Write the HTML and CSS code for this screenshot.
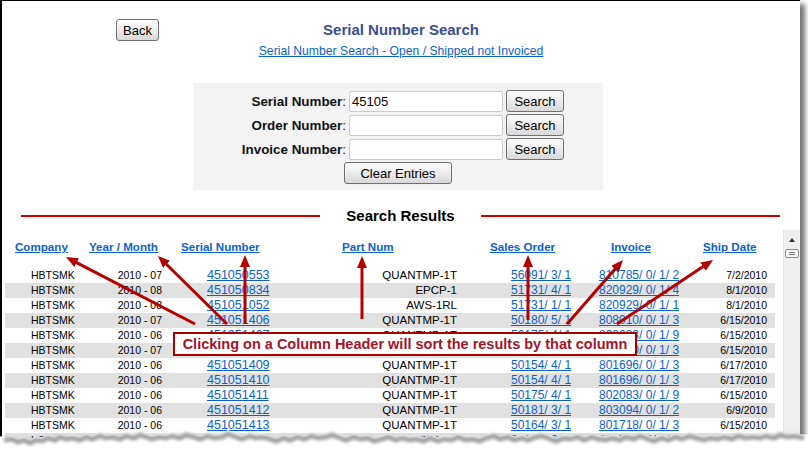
FILE: index.html
```html
<!DOCTYPE html>
<html lang="en">
<head>
    <meta charset="UTF-8">
    <title>Serial Number Search</title>
    <link rel="stylesheet" href="styles.css">
</head>
<body>
<div class="page">
    <div class="shot">
        <div class="top">
            <div class="top-left"><button type="button" class="btn back">Back</button></div>
            <h1 class="title">Serial Number Search</h1>
            <div></div>
        </div>
        <div class="sublink"><a href="#">Serial Number Search - Open / Shipped not Invoiced</a></div>

        <form class="search-box">
            <label class="lbl"><b>Serial Number</b>:</label>
            <input type="text" value="45105">
            <button type="button" class="btn search">Search</button>
            <span></span>
            <label class="lbl"><b>Order Number</b>:</label>
            <input type="text">
            <button type="button" class="btn search">Search</button>
            <span></span>
            <label class="lbl"><b>Invoice Number</b>:</label>
            <input type="text">
            <button type="button" class="btn search">Search</button>
            <span></span>
            <button type="button" class="btn clear">Clear Entries</button>
        </form>

        <div class="results-head">
            <span class="rule"></span>
            <h2>Search Results</h2>
            <span class="rule"></span>
        </div>

        <div class="results">
            <div class="grid">
                <div class="row head">
                    <span><a href="#">Company</a></span>
                    <span><a href="#">Year / Month</a></span>
                    <span><a href="#">Serial Number</a></span>
                    <span><a href="#">Part Num</a></span>
                    <span><a href="#">Sales Order</a></span>
                    <span><a href="#">Invoice</a></span>
                    <span><a href="#">Ship Date</a></span>
                </div>
                <div class="body">
                    <div class="row"><span>HBTSMK</span><span>2010 - 07</span><span><a href="#">451050553</a></span><span>QUANTMP-1T</span><span><a href="#">56091/ 3/ 1</a></span><span><a href="#">810785/ 0/ 1/ 2</a></span><span>7/2/2010</span></div>
                    <div class="row"><span>HBTSMK</span><span>2010 - 08</span><span><a href="#">451050834</a></span><span>EPCP-1</span><span><a href="#">51731/ 4/ 1</a></span><span><a href="#">820929/ 0/ 1/ 4</a></span><span>8/1/2010</span></div>
                    <div class="row"><span>HBTSMK</span><span>2010 - 08</span><span><a href="#">451051052</a></span><span>AWS-1RL</span><span><a href="#">51731/ 1/ 1</a></span><span><a href="#">820929/ 0/ 1/ 1</a></span><span>8/1/2010</span></div>
                    <div class="row"><span>HBTSMK</span><span>2010 - 07</span><span><a href="#">451051406</a></span><span>QUANTMP-1T</span><span><a href="#">50180/ 5/ 1</a></span><span><a href="#">808010/ 0/ 1/ 3</a></span><span>6/15/2010</span></div>
                    <div class="row"><span>HBTSMK</span><span>2010 - 06</span><span><a href="#">451051407</a></span><span>QUANTMP-1T</span><span><a href="#">50175/ 4/ 1</a></span><span><a href="#">802083/ 0/ 1/ 9</a></span><span>6/15/2010</span></div>
                    <div class="row"><span>HBTSMK</span><span>2010 - 07</span><span><a href="#">451051408</a></span><span>QUANTMP-1T</span><span><a href="#">50180/ 5/ 1</a></span><span><a href="#">808010/ 0/ 1/ 3</a></span><span>6/15/2010</span></div>
                    <div class="row"><span>HBTSMK</span><span>2010 - 06</span><span><a href="#">451051409</a></span><span>QUANTMP-1T</span><span><a href="#">50154/ 4/ 1</a></span><span><a href="#">801696/ 0/ 1/ 3</a></span><span>6/17/2010</span></div>
                    <div class="row"><span>HBTSMK</span><span>2010 - 06</span><span><a href="#">451051410</a></span><span>QUANTMP-1T</span><span><a href="#">50154/ 4/ 1</a></span><span><a href="#">801696/ 0/ 1/ 3</a></span><span>6/17/2010</span></div>
                    <div class="row"><span>HBTSMK</span><span>2010 - 06</span><span><a href="#">451051411</a></span><span>QUANTMP-1T</span><span><a href="#">50175/ 4/ 1</a></span><span><a href="#">802083/ 0/ 1/ 9</a></span><span>6/15/2010</span></div>
                    <div class="row"><span>HBTSMK</span><span>2010 - 06</span><span><a href="#">451051412</a></span><span>QUANTMP-1T</span><span><a href="#">50181/ 3/ 1</a></span><span><a href="#">803094/ 0/ 1/ 2</a></span><span>6/9/2010</span></div>
                    <div class="row"><span>HBTSMK</span><span>2010 - 06</span><span><a href="#">451051413</a></span><span>QUANTMP-1T</span><span><a href="#">50164/ 3/ 1</a></span><span><a href="#">801718/ 0/ 1/ 3</a></span><span>6/15/2010</span></div>
                    <div class="row"><span>HBTSMK</span><span>2010 - 06</span><span><a href="#">451051414</a></span><span>QUANTMP-1T</span><span><a href="#">50164/ 3/ 1</a></span><span><a href="#">801718/ 0/ 1/ 3</a></span><span>6/15/2010</span></div>
                </div>
            </div>
            <div class="scrollbar">
                <span class="up"></span>
                <span class="thumb"></span>
            </div>
        </div>
    </div>

    <!-- annotation layer -->
    <svg class="arrows" width="808" height="449" viewBox="0 0 808 449">
        <defs>
            <marker id="head" viewBox="0 0 12 10" refX="6" refY="5" markerWidth="12" markerHeight="10" markerUnits="userSpaceOnUse" orient="auto">
                <path d="M0,0 L12,5 L0,10 z" fill="#b50000"/>
            </marker>
        </defs>
        <g stroke="#b50000" stroke-width="3" marker-end="url(#head)">
            <line x1="195" y1="324" x2="71.3" y2="259.8"/>
            <line x1="227" y1="324" x2="162.3" y2="260.2"/>
            <line x1="245" y1="324" x2="245" y2="261"/>
            <line x1="362" y1="319" x2="362" y2="262"/>
            <line x1="528" y1="320" x2="528" y2="261"/>
            <line x1="567" y1="324" x2="619" y2="264.5"/>
            <line x1="617" y1="324" x2="708" y2="263.3"/>
        </g>
    </svg>
    <div class="callout">Clicking on a Column Header will sort the results by that column</div>

    <svg class="torn" width="808" height="449" viewBox="0 0 808 449">
        <defs>
            <filter id="soft" x="-5%" y="-100%" width="110%" height="300%">
                <feGaussianBlur stdDeviation="1.6"/>
            </filter>
        </defs>
        <polygon fill="#fff" points="-2,449 -2,436 6,437 12,435 18,438 24,436 30,439 36,436 42,437 48,434 55,436 60,433 66,435 72,434 80,436 86,433 92,435 100,432 106,434 112,433 120,435 126,432 134,434 140,431 146,433 152,435 160,433 166,434 172,432 180,434 186,431 194,433 200,435 208,432 214,434 222,433 228,430 236,433 242,435 250,432 256,434 262,433 270,435 276,437 284,434 290,436 298,433 304,435 312,432 318,434 326,433 332,431 340,434 346,436 354,433 360,435 368,434 374,437 382,435 388,433 396,436 402,434 410,436 416,435 424,437 430,434 438,437 444,435 452,436 458,433 466,436 472,435 480,437 486,434 494,432 500,435 508,433 514,436 522,434 528,436 536,433 542,432 550,435 556,437 564,434 570,435 578,433 584,436 592,433 598,435 606,436 612,434 620,436 626,433 634,435 640,432 648,435 654,437 662,434 668,436 676,433 682,435 690,432 696,434 704,436 710,434 718,435 724,433 732,435 738,432 746,434 752,433 760,434 766,432 774,434 780,431 788,433 794,432 800,434 810,435 810,449"/>
        <polyline fill="none" stroke="#7a7a7a" stroke-width="5" opacity="0.7" filter="url(#soft)" points="4,440 12,439 18,442 24,440 30,443 36,440 42,441 48,438 55,440 60,437 66,439 72,438 80,440 86,437 92,439 100,436 106,438 112,437 120,439 126,436 134,438 140,435 146,437 152,439 160,437 166,438 172,436 180,438 186,435 194,437 200,439 208,436 214,438 222,437 228,434 236,437 242,439 250,436 256,438 262,437 270,439 276,441 284,438 290,440 298,437 304,439 312,436 318,438 326,437 332,435 340,438 346,440 354,437 360,439 368,438 374,441 382,439 388,437 396,440 402,438 410,440 416,439 424,441 430,438 438,441 444,439 452,440 458,437 466,440 472,439 480,441 486,438 494,436 500,439 508,437 514,440 522,438 528,440 536,437 542,436 550,439 556,441 564,438 570,439 578,437 584,440 592,437 598,439 606,440 612,438 620,440 626,437 634,439 640,436 648,439 654,441 662,438 668,440 676,437 682,439 690,436 696,438 704,440 710,438 718,439 724,437 732,439 738,436 746,438 752,437 760,438 766,436 774,438 780,435 788,437 794,436 804,438"/>
    </svg>
</div>
</body>
</html>
```

FILE: styles.css
```css
body {
    margin: 0;
    background-color: #fff;
    font-family: "Liberation Sans", Arial, sans-serif;
    color: #000;
}
a {
    color: #0b62cc;
    text-decoration: underline;
}
.page {
    position: relative;
    width: 808px;
    height: 449px;
    overflow: hidden;
}
.shot {
    width: 798px;
    height: 448px;
    border-top: 1px solid #000;
    border-left: 2px solid #000;
    box-shadow: 5px 4px 5px rgba(0, 0, 0, 0.55);
    display: flex;
    flex-direction: column;
    overflow: hidden;
    background-color: #fff;
}
.top {
    display: grid;
    grid-template-columns: 1fr auto 1fr;
    align-items: center;
    padding-top: 18px;
}
.top-left {
    padding-left: 114px;
}
.title {
    margin: 0;
    font-size: 15px;
    line-height: 22px;
    font-weight: bold;
    color: #3b4f8d;
}
.sublink {
    margin-top: 2px;
    text-align: center;
    font-size: 12.2px;
    line-height: 16px;
}
.btn {
    font-family: "Liberation Sans", Arial, sans-serif;
    font-size: 13px;
    color: #000;
    height: 22px;
    padding: 0 4px;
    background: linear-gradient(#fefefe, #ececec 50%, #d8d8d8);
    border: 1px solid #707070;
    border-radius: 3px;
}
.back {
    width: 43px;
    display: block;
}
.search {
    width: 58px;
}
.clear {
    width: 108px;
    grid-column: 1 / -1;
    justify-self: center;
}
.search-box {
    display: grid;
    grid-template-columns: 153px 154px 58px 36px;
    grid-auto-rows: 22px;
    column-gap: 3px;
    row-gap: 2px;
    align-items: center;
    box-sizing: border-box;
    width: 410px;
    margin: 24px 0 0 191px;
    padding: 7px 0 6px;
    background-color: #f3f3f3;
}
.lbl {
    text-align: right;
    font-size: 13.4px;
    color: #111;
}
.search-box input {
    box-sizing: border-box;
    width: 154px;
    height: 21px;
    margin: 0;
    padding: 0 2px;
    border: 1px solid #cdcdcd;
    border-radius: 2px;
    font-family: "Liberation Sans", Arial, sans-serif;
    font-size: 13px;
    background-color: #fff;
}
.results-head {
    display: flex;
    align-items: center;
    gap: 26px;
    margin-top: 16px;
    padding: 0 20px 0 19px;
    height: 20px;
}
.results-head h2 {
    margin: 0;
    font-size: 15px;
    line-height: 20px;
    font-weight: bold;
}
.rule {
    flex: 1;
    height: 2px;
    background-color: #cc0000;
}
.results {
    flex: 1;
    min-height: 0;
    display: flex;
    margin-top: 4px;
    padding-left: 3px;
}
.grid {
    width: 770px;
}
.row {
    display: grid;
    grid-template-columns: 80px 85px 130px 170px 120px 100px 85px;
    height: 15px;
    line-height: 15px;
    font-size: 10.5px;
    white-space: nowrap;
}
.body .row:nth-child(even) {
    background-color: #e1e1e1;
}
.row > :nth-child(1) { padding-left: 26px; }
.row > :nth-child(2) { text-align: right; padding-right: 8px; }
.row > :nth-child(3) { padding-left: 37px; font-size: 12.5px; }
.row > :nth-child(4) { text-align: right; padding-right: 13px; font-size: 11.5px; }
.row > :nth-child(5) { padding-left: 41px; font-size: 12px; }
.row > :nth-child(6) { padding-left: 9px; font-size: 12px; }
.row > :nth-child(7) { text-align: right; padding-right: 8px; }

.row.head {
    height: 14px;
    line-height: 14px;
    padding: 10px 0 14px;
    font-weight: bold;
}
.row.head > span {
    text-align: left;
    padding-right: 0;
    font-size: 11.6px;
}
.row.head > :nth-child(1) { padding-left: 10px; }
.row.head > :nth-child(2) { padding-left: 4px; }
.row.head > :nth-child(3) { padding-left: 11px; }
.row.head > :nth-child(4) { padding-left: 42px; }
.row.head > :nth-child(5) { padding-left: 20px; }
.row.head > :nth-child(6) { padding-left: 21px; }
.row.head > :nth-child(7) { padding-left: 13px; }

.scrollbar {
    width: 16px;
    margin-left: 8px;
    border-left: 1px solid #e2e2e2;
    background-color: #efefef;
    display: flex;
    flex-direction: column;
    align-items: center;
}
.up {
    margin-top: 8px;
    width: 0;
    height: 0;
    border-left: 3px solid transparent;
    border-right: 3px solid transparent;
    border-bottom: 4px solid #333;
}
.thumb {
    box-sizing: border-box;
    margin-top: 7px;
    width: 14px;
    height: 9px;
    border: 1px solid #8c8c8c;
    border-radius: 2px;
    background: repeating-linear-gradient(#f4f4f4 0, #f4f4f4 1px, #7a7a7a 1px, #7a7a7a 2px) 3px 1px / 6px 5px no-repeat, #f4f4f4;
}
.arrows,
.torn {
    position: absolute;
    top: 0;
    left: 0;
    pointer-events: none;
}
.callout {
    position: absolute;
    left: 173px;
    top: 332px;
    width: 460px;
    height: 20px;
    line-height: 20px;
    border: 2px solid #a80000;
    background-color: #fff;
    color: #a3142a;
    font-size: 14.5px;
    font-weight: bold;
    text-align: center;
    white-space: nowrap;
}
```
